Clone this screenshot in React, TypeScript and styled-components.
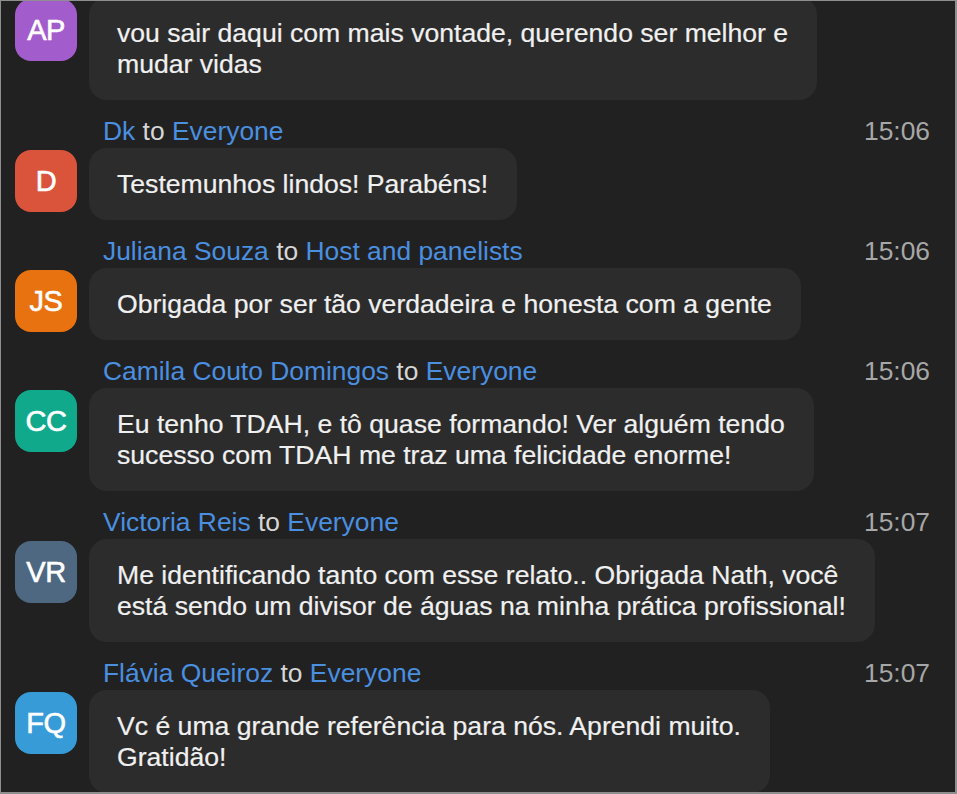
import styled, { createGlobalStyle } from 'styled-components';

interface ChatMessage {
  id: string;
  initials: string;
  color: string;
  sender?: string;
  target?: string;
  time?: string;
  lines: string[];
}

const messages: ChatMessage[] = [
  {
    id: 'ap',
    initials: 'AP',
    color: '#a35ccb',
    lines: ['vou sair daqui com mais vontade, querendo ser melhor e', 'mudar vidas'],
  },
  {
    id: 'dk',
    initials: 'D',
    color: '#d9543b',
    sender: 'Dk',
    target: 'Everyone',
    time: '15:06',
    lines: ['Testemunhos lindos! Parabéns!'],
  },
  {
    id: 'js',
    initials: 'JS',
    color: '#e8720f',
    sender: 'Juliana Souza',
    target: 'Host and panelists',
    time: '15:06',
    lines: ['Obrigada por ser tão verdadeira e honesta com a gente'],
  },
  {
    id: 'cc',
    initials: 'CC',
    color: '#11a98b',
    sender: 'Camila Couto Domingos',
    target: 'Everyone',
    time: '15:06',
    lines: ['Eu tenho TDAH, e tô quase formando! Ver alguém tendo', 'sucesso com TDAH me traz uma felicidade enorme!'],
  },
  {
    id: 'vr',
    initials: 'VR',
    color: '#4e6882',
    sender: 'Victoria Reis',
    target: 'Everyone',
    time: '15:07',
    lines: [
      'Me identificando tanto com esse relato.. Obrigada Nath, você',
      'está sendo um divisor de águas na minha prática profissional!',
    ],
  },
  {
    id: 'fq',
    initials: 'FQ',
    color: '#379bd8',
    sender: 'Flávia Queiroz',
    target: 'Everyone',
    time: '15:07',
    lines: ['Vc é uma grande referência para nós. Aprendi muito.', 'Gratidão!'],
  },
];

export default function App() {
  return (
    <>
      <GlobalStyle />
      <Frame>
        <MessageList>
          {messages.map((msg) => (
            <MessageRow key={msg.id}>
              {msg.sender && (
                <HeaderLine>
                  <Meta>
                    <Name>{msg.sender}</Name> to <Name>{msg.target}</Name>
                  </Meta>
                  <Time>{msg.time}</Time>
                </HeaderLine>
              )}
              <Body>
                <Avatar $color={msg.color}>{msg.initials}</Avatar>
                <Bubble>
                  {msg.lines.map((line, i) => (
                    <Line key={i}>{line}</Line>
                  ))}
                </Bubble>
              </Body>
            </MessageRow>
          ))}
        </MessageList>
      </Frame>
    </>
  );
}

const GlobalStyle = createGlobalStyle`
  html, body {
    margin: 0;
    padding: 0;
    background: #8e8e8e;
  }
  body {
    font-family: "Liberation Sans", Arial, sans-serif;
  }
`;

const Frame = styled.div`
  box-sizing: border-box;
  width: 957px;
  height: 794px;
  margin: 0;
  border-style: solid;
  border-color: #8e8e8e;
  border-width: 1px 2px 2px 1px;
  background: #212121;
  overflow: hidden;
`;

const MessageList = styled.div`
  display: flex;
  flex-direction: column;
  margin-top: -4px;
`;

const MessageRow = styled.div`
  display: flex;
  flex-direction: column;
  padding: 0 25px 0 14px;
`;

const HeaderLine = styled.div`
  display: flex;
  align-items: flex-end;
  justify-content: space-between;
  height: 48px;
  padding: 0 0 2px 88px;
  box-sizing: border-box;
  font-size: 26.4px;
  line-height: 30px;
`;

const Meta = styled.div`
  color: #d6d6d6;
  white-space: nowrap;
`;

const Name = styled.span`
  color: #4a8fe0;
`;

const Time = styled.div`
  color: #a7a7a7;
`;

const Body = styled.div`
  display: flex;
  align-items: flex-start;
  gap: 12px;
`;

const Avatar = styled.div<{ $color: string }>`
  flex: none;
  width: 62px;
  height: 62px;
  margin-top: 2px;
  border-radius: 16px;
  background: ${(p) => p.$color};
  color: #ffffff;
  display: flex;
  align-items: center;
  justify-content: center;
  font-size: 29px;
  letter-spacing: -0.5px;
  -webkit-text-stroke: 0.6px #ffffff;
`;

const Bubble = styled.div`
  background: #2c2c2c;
  border-radius: 18px;
  padding: 21px 29px 20px 28px;
  color: #f0f0f0;
  font-size: 26.6px;
  line-height: 31px;
  -webkit-text-stroke: 0.2px #f0f0f0;
`;

const Line = styled.div`
  white-space: nowrap;
`;
